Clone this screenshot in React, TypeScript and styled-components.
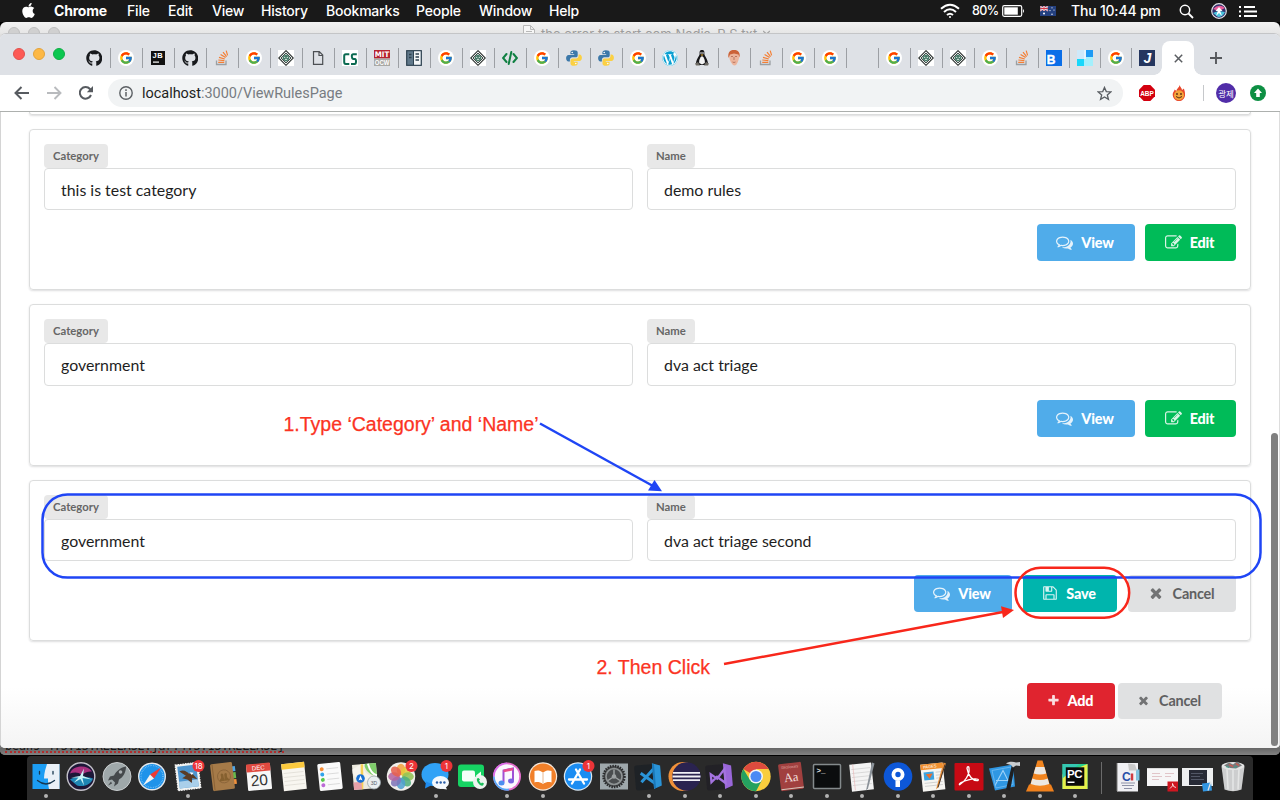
import React from "react";
import styled, { createGlobalStyle } from "styled-components";
import { FaApple, FaGithub, FaWordpress } from "react-icons/fa";
import { FcGoogle } from "react-icons/fc";

const GlobalStyle = createGlobalStyle`
  * { box-sizing: border-box; }
  html, body { margin: 0; padding: 0; background: #000; overflow: hidden; }
  svg { display: block; flex: none; }
`;

const Screen = styled.div`
  width: 1280px;
  height: 800px;
  display: flex;
  flex-direction: column;
  background: #000;
  overflow: hidden;
  position: relative;
  font-family: Lato, "Liberation Sans", sans-serif;
`;

/* ---------- system menu bar ---------- */

const MenuBar = styled.div`
  height: 22px;
  flex: none;
  display: flex;
  align-items: center;
  background: #191919;
  color: #fff;
  font: 500 14px/22px Inter, Roboto, sans-serif;
  padding-left: 20px;
`;

const AppleSlot = styled.div`
  width: 34px;
  padding-bottom: 2px;
`;

const MenuItem = styled.div<{ $w: number; $bold?: boolean; $ls?: number }>`
  width: ${(p) => p.$w}px;
  flex: none;
  white-space: nowrap;
  font-weight: ${(p) => (p.$bold ? 700 : 500)};
  letter-spacing: ${(p) => p.$ls ?? -0.2}px;
`;

const StatusArea = styled.div`
  margin-left: auto;
  display: flex;
  align-items: center;
  height: 22px;
`;

const StatusText = styled.span<{ $size?: number; $w: number; $ls?: number }>`
  font-size: ${(p) => p.$size ?? 14}px;
  width: ${(p) => p.$w}px;
  letter-spacing: ${(p) => p.$ls ?? -0.2}px;
  white-space: nowrap;
`;

const StatusIcon = styled.div<{ $w: number }>`
  width: ${(p) => p.$w}px;
  flex: none;
`;

/* ---------- windows ---------- */

const BackWindow = styled.div`
  height: 733px;
  flex: none;
  border-radius: 6px 6px 5px 5px;
  background: linear-gradient(#f2f2f2 0, #e6e6e6 11px, #777 40px);
  overflow: hidden;
`;

const BackTitle = styled.div`
  height: 11px;
  display: flex;
  padding-left: 8px;
  overflow: hidden;
`;

const BackDot = styled.i`
  width: 12px;
  height: 12px;
  margin: 5px 8px 0 0;
  border-radius: 50%;
  border: 1px solid #bdbdbd;
  background: #d0d0d0;
  flex: none;
`;

const BackCaption = styled.div`
  display: flex;
  gap: 6px;
  margin-left: 455px;
  margin-top: 3px;
  height: 18px;
  color: #9c9c9c;
  font: 400 13px/18px Inter, sans-serif;
  white-space: nowrap;
`;

const BackFoot = styled.div`
  height: 7px;
  overflow: hidden;
  background: linear-gradient(#666, #828282);
  display: flex;
  align-items: flex-start;
  padding-left: 5px;
`;

const ConsoleLine = styled.div`
  margin-top: -8px;
  height: 13px;
  font: 11.6px/13px "DejaVu Sans Mono", monospace;
  color: #181818;
  white-space: nowrap;
  border-bottom: 2px dotted #b02c2c;
`;

const Browser = styled.div`
  height: 715px;
  display: flex;
  flex-direction: column;
  border-radius: 6px 6px 5px 5px;
  overflow: hidden;
  background: #fff;
  border-top: 1px solid #c4c5c7;
`;

const TabStrip = styled.div`
  height: 41px;
  flex: none;
  display: flex;
  align-items: flex-end;
  background: #dee1e6;
  padding-left: 13px;
`;

const Lights = styled.div`
  display: flex;
  gap: 8px;
  width: 65px;
  padding-bottom: 15px;
`;

const Light = styled.i<{ $c: string; $b: string }>`
  width: 12px;
  height: 12px;
  border-radius: 50%;
  background: ${(p) => p.$c};
  border: 1px solid ${(p) => p.$b};
`;

const Tab = styled.div<{ $w?: number; $edge?: boolean }>`
  width: ${(p) => p.$w ?? 32}px;
  height: 20px;
  margin-bottom: 7px;
  padding-right: ${(p) => (p.$w === 32 || p.$w === undefined ? 1 : 0)}px;
  flex: none;
  display: flex;
  align-items: center;
  justify-content: center;
  border-right: ${(p) => (p.$edge ? "none" : "1px solid #9c9fa4")};
`;

const GoogleDisc = styled.div`
  width: 16px;
  height: 16px;
  border-radius: 50%;
  background: #fff;
  display: flex;
  align-items: center;
  justify-content: center;
`;

const ActiveTab = styled.div`
  width: 32px;
  height: 34px;
  flex: none;
  border-radius: 8px 8px 0 0;
  background: #fff;
  display: flex;
  align-items: center;
  justify-content: center;
  position: relative;
  &::before,
  &::after {
    content: "";
    position: absolute;
    bottom: 0;
    width: 8px;
    height: 8px;
  }
  &::before {
    left: -8px;
    background: radial-gradient(circle at 0 0, transparent 7.5px, #fff 8px);
  }
  &::after {
    right: -8px;
    background: radial-gradient(circle at 100% 0, transparent 7.5px, #fff 8px);
  }
`;

const NewTab = styled.div`
  width: 44px;
  height: 34px;
  display: flex;
  align-items: center;
  justify-content: center;
`;

const Toolbar = styled.div`
  height: 37px;
  flex: none;
  display: flex;
  align-items: center;
  background: #fff;
  border-bottom: 1px solid #adb0ae;
  padding-left: 14px;
`;

const NavButton = styled.div<{ $w: number }>`
  width: ${(p) => p.$w}px;
  flex: none;
`;

const Omnibox = styled.div`
  width: 1015px;
  height: 28px;
  border-radius: 14px;
  background: #f1f3f4;
  display: flex;
  align-items: center;
  padding: 0 11px 0 11px;
`;

const Url = styled.div`
  flex: 1;
  margin-left: 9px;
  padding-top: 1px;
  font: 400 14.5px/28px Roboto, sans-serif;
  letter-spacing: -0.03px;
  color: #777c82;
  b {
    font-weight: 400;
    color: #1d1f22;
  }
`;

const Extensions = styled.div`
  display: flex;
  align-items: center;
`;

const Slot = styled.div<{ $ml: number }>`
  margin-left: ${(p) => p.$ml}px;
`;

const Avatar = styled.div`
  width: 20px;
  height: 20px;
  margin-left: 12px;
  border-radius: 50%;
  background: #512da8;
  color: #fff;
  font: 400 8.5px/20px "Noto Sans CJK KR", sans-serif;
  text-align: center;
  white-space: nowrap;
`;

const Rule = styled.i`
  width: 1px;
  height: 16px;
  margin-left: 16px;
  background: #c6c8cb;
`;

/* ---------- page ---------- */

const Page = styled.div`
  flex: 1;
  min-height: 0;
  display: flex;
  border-left: 1px solid #d4d4d4;
  background: linear-gradient(#fff 0, #fff 575px, #f4f4f4 100%);
`;

const Content = styled.div`
  flex: 1;
  padding: 0 19px 0 28px;
`;

const ScrollTrack = styled.div`
  width: 9px;
  padding: 321px 2px 0 0;
  border-right: 1px solid #ddd;
`;

const Thumb = styled.div`
  width: 7px;
  height: 313px;
  border-radius: 4px;
  background: #808080;
`;

const Card = styled.section<{ $tail?: boolean }>`
  height: ${(p) => (p.$tail ? 3 : 161.4)}px;
  margin-bottom: 14px;
  padding: ${(p) => (p.$tail ? "0" : "14px")};
  width: 1222px;
  border: 1px solid #dcdddd;
  border-top-width: ${(p) => (p.$tail ? 0 : 1)}px;
  border-radius: ${(p) => (p.$tail ? "0 0 4px 4px" : "4px")};
  box-shadow: 0 1px 2px 0 rgba(34, 36, 38, 0.15);
`;

const Fields = styled.div`
  display: grid;
  grid-template-columns: 1fr 1fr;
  gap: 14px;
`;

const Label = styled.div`
  display: table;
  height: 24px;
  padding: 0 9px;
  border-radius: 4px;
  background: #e8e8e8;
  color: #666;
  font: 700 11.3px/24px Lato, sans-serif;
`;

const Input = styled.div`
  height: 42.2px;
  padding: 0 16px;
  border: 1px solid #dcdddd;
  border-radius: 4px;
  background: #fff;
  color: #1e1e1e;
  font: 400 15.9px/42px Lato, sans-serif;
`;

const Actions = styled.div<{ $gap: number }>`
  display: flex;
  justify-content: flex-end;
  gap: ${(p) => p.$gap}px;
  margin-top: 14px;
`;

const FooterActions = styled.div`
  display: flex;
  gap: 3px;
  justify-content: flex-end;
  margin-top: 41.8px;
  padding-right: 30px;
`;

type Tone = "blue" | "green" | "teal" | "red" | "grey";
const tones: Record<Tone, string> = {
  blue: "#50acea",
  green: "#00bb58",
  teal: "#00b5ad",
  red: "#e0242f",
  grey: "#e0e1e2",
};

const Button = styled.div<{ $tone: Tone; $w: number; $short?: boolean }>`
  width: ${(p) => p.$w}px;
  height: ${(p) => (p.$short ? 36 : 37)}px;
  padding-right: 2px;
  display: flex;
  align-items: center;
  justify-content: center;
  border-radius: 4px;
  background: ${(p) => tones[p.$tone]};
  color: ${(p) => (p.$tone === "grey" ? "#5f6061" : "#fff")};
  font: ${(p) => (p.$tone === "grey" ? 700 : 900)} 14.4px / ${(p) => (p.$short ? 36 : 37)}px Lato, sans-serif;
  letter-spacing: -0.2px;
  svg {
    fill: currentColor;
    opacity: 0.85;
    margin-right: ${(p) => (p.$tone === "grey" ? 9 : 8)}px;
  }
`;

const Overlay = styled.svg`
  position: absolute;
  left: 0;
  top: 0;
  pointer-events: none;
`;

/* ---------- dock ---------- */

const Dock = styled.div`
  width: 1226px;
  height: 44px;
  margin: 1px 0 0 27px;
  flex: none;
  display: flex;
  border-radius: 4px 4px 0 0;
  background: #2a2a2a;
  padding-left: 1px;
`;

const DockSlot = styled.div<{ $w?: number }>`
  width: ${(p) => p.$w ?? 35.5}px;
  height: 44px;
  flex: none;
  display: flex;
  justify-content: center;
  svg {
    overflow: visible;
  }
`;

const paths = {
  comments:
    "M704 384q-153 0-286 52t-211.500 141-78.500 191q0 82 53 158t149 132l97 56-35 84q34-20 62-39l44-31 53 10q78 14 153 14 153 0 286-52t211.500-141 78.500-191-78.500-191-211.500-141-286-52zM704 256q191 0 353.500 68.500t256.500 186.500 94 257-94 257-256.500 186.500-353.500 68.500q-86 0-176-16-124 88-278 128-36 9-86 16h-3q-11 0-20.500-8t-11.500-21q-1-3-1-6.500t.5-6.5 2-6l2.500-5 3.500-5.500 4-5 4.500-5 4-4.500q5-6 23-25t26-29.500 22.500-29 25-38.500 20.500-44q-124-72-195-177t-71-224q0-139 94-257t256.500-186.500 353.500-68.500zM1526 1425q10 24 20.500 44t25 38.500 22.500 29 26 29.500 23 25q1 1 4 4.500t4.500 5 4 5 3.500 5.500l2.500 5t2 6 .5 6.500-1 6.500q-3 14-13 22t-22 7q-50-7-86-16-154-40-278-128-90 16-176 16-271 0-472-132 58 4 88 4 161 0 309-45t264-129q125-92 192-212t67-254q0-77-23-152 129 71 204 178t75 230q0 120-71 224.500t-195 176.500z",
  edit: "M888 1184l116-116-152-152-116 116v56h96v96h56zm440-720q-16-16-33 1l-350 350q-17 17-1 33t33-1l350-350q17-17 1-33zm80 594v190q0 119-84.500 203.500t-203.500 84.500h-832q-119 0-203.500-84.500t-84.500-203.500v-832q0-119 84.500-203.500t203.500-84.500h832q63 0 117 25 15 7 18 23 3 17-9 29l-49 49q-14 14-32 8-23-6-45-6h-832q-66 0-113 47t-47 113v832q0 66 47 113t113 47h832q66 0 113-47t47-113v-126q0-13 9-22l64-64q15-15 35-7t20 29zm-96-738l288 288-672 672h-288v-288zm444 132l-92 92-288-288 92-92q28-28 68-28t68 28l152 152q28 28 28 68t-28 68z",
  save: "M512 1536h768v-384h-768v384zm896 0h128v-896q0-14-10-38.500t-20-34.500l-281-281q-10-10-34-20t-39-10v416q0 40-28 68t-68 28h-576q-40 0-68-28t-28-68v-416h-128v1280h128v-416q0-40 28-68t68-28h832q40 0 68 28t28 68v416zm-384-928v-320q0-13-9.500-22.500t-22.500-9.500h-192q-13 0-22.500 9.500t-9.500 22.500v320q0 13 9.500 22.500t22.500 9.500h192q13 0 22.500-9.500t9.500-22.500zm640 32v928q0 40-28 68t-68 28h-1344q-40 0-68-28t-28-68v-1344q0-40 28-68t68-28h928q40 0 88 20t76 48l280 280q28 28 48 76t20 88z",
  times:
    "M1490 1322q0 40-28 68l-136 136q-28 28-68 28t-68-28l-294-294-294 294q-28 28-68 28t-68-28l-136-136q-28-28-28-68t28-68l294-294-294-294q-28-28-28-68t28-68l136-136q28-28 68-28t68 28l294 294 294-294q28-28 68-28t68 28l136 136q28 28 28 68t-28 68l-294 294 294 294q28 28 28 68z",
  plus: "M1600 736v192q0 40-28 68t-68 28h-416v416q0 40-28 68t-68 28h-192q-40 0-68-28t-28-68v-416h-416q-40 0-68-28t-28-68v-192q0-40 28-68t68-28h416v-416q0-40 28-68t68-28h192q40 0 68 28t28 68v416h416q40 0 68 28t28 68z",
};

const Glyph = ({ name, size = 17 }: { name: keyof typeof paths; size?: number }) => (
  <svg width={size} height={size} viewBox="0 0 1792 1792">
    <path d={paths[name]} />
  </svg>
);

/* ---------- favicons ---------- */

const Box16 = ({ children }: { children: React.ReactNode }) => (
  <svg width="16" height="16" viewBox="0 0 16 16">
    {children}
  </svg>
);

const Google = () => (
  <GoogleDisc>
    <FcGoogle size={14} />
  </GoogleDisc>
);

const Diamond = () => (
  <Box16>
    <rect width="16" height="16" fill="#fff" />
    <path d="M8 .7 15.300 8 8 15.300.7 8z" fill="#fff" stroke="#2b312f" strokeWidth="1.100" />
    <path d="M8 3 13 8 8 13 3 8z" fill="#b9c9c2" stroke="#3f4d48" strokeWidth="1" />
    <circle cx="8" cy="8" r="3" fill="#3d7560" />
    <path d="M6 7.300h1.300M8.700 7.300H10M6.800 9.300h2.400" stroke="#fff" strokeWidth=".9" />
  </Box16>
);

const StackO = () => (
  <Box16>
    <path d="M2.500 10.500V14.500H12V10.500" fill="none" stroke="#9b9fa3" strokeWidth="1.300" />
    <path
      d="M4.200 12.400H10.300M4.300 10 10.400 10.700M5 7.300 10.800 9M6.600 4.400 11.600 7.600M9 2.200 12.600 6.600M12.200.6 13.600 5.400"
      stroke="#f47f35"
      strokeWidth="1.200"
      fill="none"
    />
  </Box16>
);

const Python = () => (
  <Box16>
    <path
      d="M7.900.2C5.300.2 4.400 1.200 4.400 2.500V4.300H8.200V5H2.600C1 5 .1 6.300.1 8.200S1.100 11.500 2.400 11.500H3.900V9.600C3.900 8.300 5 7.300 6.300 7.300H9.800C10.900 7.300 11.700 6.500 11.700 5.400V2.500C11.700 1.100 10.400.2 7.900.2Z"
      fill="#3c78a9"
    />
    <path
      d="M8.100 15.800C10.700 15.800 11.600 14.800 11.600 13.500V11.700H7.800V11H13.400C15 11 15.900 9.700 15.900 7.800S14.900 4.500 13.600 4.500H12.500V6C12.500 7.300 11.400 8.400 10.100 8.400H6.400C5.300 8.400 4.500 9.400 4.500 10.500V13.500C4.500 14.900 5.700 15.800 8.100 15.800Z"
      fill="#fbd043"
    />
    <circle cx="6.200" cy="2.500" r=".8" fill="#fff" />
    <circle cx="9.800" cy="13.500" r=".8" fill="#fff" />
  </Box16>
);

const Favicon = ({ kind }: { kind: string }) => {
  switch (kind) {
    case "git":
      return <FaGithub size={16.5} color="#17191c" />;
    case "g":
      return <Google />;
    case "so":
      return <StackO />;
    case "di":
      return <Diamond />;
    case "py":
      return <Python />;
    case "wp":
      return (
        <GoogleDisc>
          <FaWordpress size={16} color="#0aa0d2" />
        </GoogleDisc>
      );
    case "jb":
      return (
        <Box16>
          <rect x="1" y="1" width="14" height="14" fill="#111" />
          <text x="2.600" y="8.300" fontSize="7.500" fontWeight="700" fill="#fff" fontFamily="Liberation Sans" textLength="10">
            JB
          </text>
          <rect x="3" y="11.500" width="6" height="1.200" fill="#fff" />
        </Box16>
      );
    case "file":
      return (
        <Box16>
          <path d="M3.500 1.700H9.300L12.700 5.100V14.300H3.500ZM9 2V5.500H12.500" fill="none" stroke="#4c4f53" strokeWidth="1.200" />
        </Box16>
      );
    case "cs":
      return (
        <Box16>
          <rect width="16" height="16" fill="#fff" />
          <path d="M7.300 4.200H3.800Q2.200 4.200 2.200 6V12Q2.200 14 3.800 14H7.300" fill="none" stroke="#0b6a51" strokeWidth="2" />
          <path d="M14.800 4.200H11.300Q9.800 4.200 9.800 6.300T11.300 9H13Q14 9 14 11.500T12.500 14H9" fill="none" stroke="#0b6a51" strokeWidth="2" />
        </Box16>
      );
    case "mit":
      return (
        <Box16>
          <rect width="16" height="8.500" fill="#b5222e" />
          <rect y="8.500" width="16" height="7.500" fill="#a9a9a5" />
          <text x=".8" y="7.400" fontSize="7.600" fontWeight="700" fill="#fff" fontFamily="DejaVu Sans" textLength="14.500" lengthAdjust="spacingAndGlyphs">
            MIT
          </text>
          <text x=".8" y="14.800" fontSize="6.800" fontWeight="700" fill="#fff" fontFamily="Liberation Sans" textLength="14.500" lengthAdjust="spacingAndGlyphs">
            OCW
          </text>
        </Box16>
      );
    case "book":
      return (
        <Box16>
          <rect x=".7" y=".7" width="14.600" height="14.600" fill="#60788a" stroke="#2e4250" strokeWidth="1.200" />
          <rect x="7.800" y="1.300" width="6.800" height="13.400" fill="#f4f6f7" />
          <path d="M7.500 1V15" stroke="#2e4250" />
          <path d="M3 4.500H5.500M3 7.500H5.500M9.500 4H13M9.500 7H13M9.500 10H13" stroke="#2e4250" strokeWidth="1.400" />
        </Box16>
      );
    case "code":
      return (
        <Box16>
          <path d="M4.500 4 1.100 8 4.500 12M11.500 4 14.900 8 11.500 12M9.300 2 6.700 14" fill="none" stroke="#108043" strokeWidth="2" strokeLinecap="round" />
        </Box16>
      );
    case "tux":
      return (
        <Box16>
          <path d="M8 0C5.500 0 5.500 2 5.600 4 5.600 6 2.500 8.500 2 13L4 15H12L14 13C13.500 8.500 10.400 6 10.400 4 10.500 2 10.500 0 8 0Z" fill="#17171a" />
          <path d="M8 6C6 7.500 4.800 10 5.200 13L8 14.500 10.800 13C11.200 10 10 7.500 8 6Z" fill="#f3f3f3" />
          <circle cx="7" cy="3" r=".8" fill="#fff" />
          <circle cx="9" cy="3" r=".8" fill="#fff" />
          <path d="M6.500 4.500H9.500L8 6Z" fill="#eab02d" />
          <path d="M1 13.500 4 12 6 15.500H2ZM15 13.500 12 12 10 15.500H14Z" fill="#6d6a63" />
        </Box16>
      );
    case "face":
      return (
        <Box16>
          <path d="M3 4C3 1 5 0 8 0S13.500 1.500 13.300 5C13.300 9 12 12 10.500 14.500Q8.500 16.500 6.500 14.500C4 11.500 3 8 3 4Z" fill="#ecb49b" />
          <path d="M2.500 8C1.500 2.500 4 0 8 0S14.500 2.500 13.500 7.500L12.500 4.500 8 3.500 4 4.500Z" fill="#cb6238" />
          <path d="M5 6.500H7M9 6.500H11M8 7V10M6.500 12Q8 13 9.500 12" stroke="#a55c49" strokeWidth=".7" fill="none" />
        </Box16>
      );
    case "b":
      return (
        <Box16>
          <rect width="16" height="16" fill="#0a6ee8" />
          <text x="0.800" y="14.300" fontSize="12" fontWeight="700" fill="#fff" stroke="#fff" strokeWidth=".4" fontFamily="Liberation Sans">
            B
          </text>
        </Box16>
      );
    case "tiles":
      return (
        <Box16>
          <rect width="9" height="9" fill="#cfe9fa" />
          <rect x="9" width="7" height="7" fill="#1e9af4" />
          <rect y="9" width="7" height="7" fill="#19d7fb" />
          <rect x="7" y="7" width="9" height="9" fill="#a4effc" />
          <rect x="7" width="2" height="9" fill="#e6f4fd" />
        </Box16>
      );
    case "j":
      return (
        <Box16>
          <rect width="16" height="16" fill="#25365f" />
          <text x="4.500" y="12.800" fontSize="14" fontWeight="700" fontStyle="italic" fill="#fff" fontFamily="Liberation Sans">
            J
          </text>
        </Box16>
      );
    default:
      return null;
  }
};

const tabs =
  "git g jb git so g di file cs mit book g di code g py py g wp tux face so g g blank g di di g so b tiles g j".split(" ");

const tabWidth = (i: number) => {
  if (i === 0) return 33;
  if (i === tabs.length - 1) return 30;
  return i >= 30 ? 31 : 32;
};

/* ---------- dock icons: artwork centred on 0,0 ---------- */

const dockArt: Record<string, React.ReactNode> = {
  finder: (
    <>
      <rect x="-13.500" y="-12.500" width="27" height="25" fill="#1c9df3" />
      <path d="M1-12.500H13.500V12.500H3C2 8 2 5 2 2H-2C-2-4 0-9 1-12.500Z" fill="#e9f0f7" />
      <path d="M-6.500-5V-2.500M7-5V-2.500M-8.500 4Q0 11 8.500 4" stroke="#17374f" strokeWidth="1.300" fill="none" strokeLinecap="round" />
    </>
  ),
  siri: (
    <>
      <circle r="13.800" fill="#1d1738" stroke="#c3c1c9" strokeWidth="1.400" />
      <path d="M-11-3C-9-11 6-13 11-5 6-5 3-4 1-1-3-5-7-4-11-3Z" fill="#a8307f" />
      <path d="M-11 3C-6 0-2 0 0 0 5 0 9 1 12 2 10 8 3 11-4 9Z" fill="#1e86b4" />
      <path d="M-10 1-1-.5 3-8 2-.5 11 3 1.500 1.500 3 9-.5 2.500-7 6-2.500 1Z" fill="#c9f4f6" />
    </>
  ),
  launch: (
    <>
      <circle r="14" fill="#9fa8aa" stroke="#c9cdcf" strokeWidth="1" />
      <path d="M9-10C3-9-1-5-3-1L-7 0-9 4-5 3-2 6-3 10 1 7 2 3C6 1 9-4 9-10Z" fill="#45494c" />
      <circle cx="3.500" cy="-4.500" r="1.800" fill="#a9afb2" />
      <path d="M-6 5-9 9-5 7Z" fill="#45494c" />
    </>
  ),
  safari: (
    <>
      <circle r="14" fill="#e4e8ec" />
      <circle r="12.600" fill="#1f93ea" />
      <circle r="11" fill="none" stroke="#8fcbf7" strokeWidth="1.200" strokeDasharray=".6 1.100" />
      <path d="M9-9 2 2-2-2Z" fill="#ee3a34" />
      <path d="M-9 9 2 2-2-2Z" fill="#f3f3f3" />
    </>
  ),
  mail: (
    <g transform="rotate(-7)">
      <rect x="-11.500" y="-13" width="23" height="26" fill="#f1f2f0" stroke="#fff" strokeDasharray="1.500 1" />
      <rect x="-9.500" y="-11" width="19" height="22" fill="#4f96cf" />
      <rect x="-9.500" y="4" width="19" height="7" fill="#a9cfea" />
      <path d="M-8-6C-3-8 0-4 1-3L5-2 9 4 4 2 3 7-1 3-6 1-2-1Z" fill="#5a3c26" />
      <path d="M2-4 6-3 4-1Z" fill="#fff" />
    </g>
  ),
  contacts: (
    <g transform="rotate(-7)">
      <path d="M9-9H13V-4H9Z" fill="#4fa6e8" />
      <path d="M9-3H13V3H9Z" fill="#66bb4d" />
      <path d="M9 4H13V9H9Z" fill="#f0913c" />
      <rect x="-11.500" y="-13.500" width="22" height="27" rx="1.500" fill="#a57a48" />
      <path d="M-9.500-13V13" stroke="#8a6236" />
      <circle cx="1" cy="0" r="6.500" fill="none" stroke="#8a6338" strokeWidth=".9" />
      <path d="M-4 4.500C-3.500 2-1.500 2-2-.5-3-4 1-4 .6-.5.5 2 1 2 1 4.500ZM6 4.500C5.500 2 3.500 2 4-.5 5-4 1-4 1.400-.5 1.500 2 1 2 1 4.500Z" fill="#85602f" />
    </g>
  ),
  cal: (
    <g transform="rotate(-5)">
      <rect x="-12" y="-12.500" width="24" height="26" rx="1" fill="#f7f7f7" />
      <rect x="-12" y="-13" width="24" height="8" rx="1" fill="#e0493f" />
      <text y="-6.600" fontSize="6" fill="#fff" textAnchor="middle" fontFamily="Liberation Sans">
        DEC
      </text>
      <text y="9" fontSize="15.500" fill="#333" textAnchor="middle" fontFamily="Liberation Sans">
        20
      </text>
    </g>
  ),
  notes: (
    <g transform="rotate(-6)">
      <rect x="-11.500" y="-13.500" width="23" height="27" fill="#f8f6f0" />
      <rect x="-11.500" y="-13.500" width="23" height="5.500" fill="#fcca3e" />
      <path d="M-10-4H10M-10 0H10M-10 4H10M-10 8H10" stroke="#dddad2" strokeWidth=".7" />
    </g>
  ),
  remind: (
    <g transform="rotate(-6)">
      <rect x="-11.500" y="-13.500" width="23" height="27" rx="1.500" fill="#fafafa" />
      <circle cx="-7.500" cy="-8" r="2" fill="#f58b34" />
      <circle cx="-7.500" cy="-2.700" r="2" fill="#30a3ea" />
      <circle cx="-7.500" cy="2.600" r="2" fill="#5ac94c" />
      <circle cx="-7.500" cy="8" r="2" fill="#bc6ad6" />
      <path d="M-3-8H9M-3-2.700H9M-3 2.600H9M-3 8H9" stroke="#d5d5d5" strokeWidth=".8" />
    </g>
  ),
  maps: (
    <>
      <g transform="rotate(-5)">
        <rect x="-12" y="-12.500" width="24" height="25" fill="#ece9dd" />
        <path d="M0-12.500H12V0C6 0 1-5 0-12.500Z" fill="#7fcd6b" />
        <path d="M-12-8-3-12.500H1C-3-4 4 0 12 2V7C0 5-8 4-12-4Z" fill="#f6f3ec" />
        <path d="M-4 12.500-2-12.500" stroke="#f7cf56" strokeWidth="2.500" />
        <path d="M4-12.500Q6-2 12 0" stroke="#fff" strokeWidth="2" fill="none" />
        <rect x="-12" y="5" width="8" height="7.500" fill="#e5a0a8" />
      </g>
      <circle cx="-4.500" cy="2" r="4.300" fill="#1770d4" />
      <path d="M-4.500-1-2.500 4-4.500 3-6.500 4Z" fill="#fff" />
      <circle cx="9" cy="6" r="6.500" fill="#e9eef0" stroke="#99a4a9" strokeWidth=".8" />
      <text x="9" y="8" fontSize="5" fill="#55606a" textAnchor="middle" fontFamily="Liberation Sans">
        3D
      </text>
    </>
  ),
  photos: (
    <>
      <circle r="14.200" fill="#f1efeb" />
      {["#f5a13c", "#e5c93a", "#92c353", "#4fae7c", "#4f9fd0", "#7f74b9", "#b5639f", "#e7604d"].map((c, i) => (
        <ellipse key={c} cy="-7" rx="4.300" ry="5.800" fill={c} opacity=".86" transform={`rotate(${i * 45})`} />
      ))}
    </>
  ),
  messages: (
    <>
      <ellipse cx="-1" cy="-2" rx="13.500" ry="11.500" fill="#30a2f6" />
      <path d="M-10 5-11 12-3 8Z" fill="#1f8cee" />
      <ellipse cx="4.500" cy="6" rx="8.500" ry="6.500" fill="#f4f9fd" />
      <path d="M9 9 11 13 4 12Z" fill="#f4f9fd" />
      <circle cx="1" cy="6" r="1.200" fill="#2a5ea8" />
      <circle cx="4.700" cy="6" r="1.200" fill="#2a5ea8" />
      <circle cx="8.400" cy="6" r="1.200" fill="#2a5ea8" />
    </>
  ),
  facetime: (
    <>
      <rect x="-14" y="-12" width="26" height="22.500" rx="3" fill="#16d363" />
      <rect x="-10" y="-6" width="13" height="11" rx="2" fill="#f4fff8" />
      <path d="M4-1 9-5V4Z" fill="#f4fff8" />
      <circle cx="8" cy="5.500" r="7" fill="#eef4f0" />
      <path d="M5 2C4 5 8 10 11 9L12 7 10 6 9 7 7 4 8 3 6.500 1.500Z" fill="#19bd59" />
    </>
  ),
  itunes: (
    <>
      <circle r="14" fill="#e46fcd" />
      <path d="M-14 0A14 14 0 0 1 0-14L0 0Z" fill="#d86ce6" />
      <path d="M-14 0A14 14 0 0 0 2 14L0 0Z" fill="#5aa9f5" />
      <circle r="12.200" fill="#fbf8fd" />
      <path d="M-3.500 6V-6L6-8V4" stroke="#a04fd6" strokeWidth="2" fill="none" />
      <path d="M-3.500-5.500 6-7.500" stroke="#e84b8b" strokeWidth="2.600" />
      <ellipse cx="-5.500" cy="6.500" rx="3" ry="2.500" fill="#4c8ef0" />
      <ellipse cx="4" cy="4.500" rx="3" ry="2.500" fill="#7a63df" />
    </>
  ),
  books: (
    <>
      <circle r="14.200" fill="#f6e9dd" />
      <circle r="13" fill="#f1802a" />
      <path d="M0-4C-3-6.500-6-6.500-8.500-5.500V6C-6 5-3 5.500 0 7.500 3 5.500 6 5 8.500 6V-5.500C6-6.500 3-6.500 0-4Z" fill="#fff" />
      <path d="M0-4V7" stroke="#e5a673" strokeWidth=".8" />
    </>
  ),
  appstore: (
    <>
      <circle r="14.200" fill="#dbe9f4" />
      <circle r="13" fill="#1b8df2" />
      <path d="M-6 7 2-7M6 7-2-7M-9 3H9" stroke="#fff" strokeWidth="2.300" strokeLinecap="round" />
    </>
  ),
  prefs: (
    <>
      <rect x="-14" y="-13" width="28" height="26" fill="#9ea7ab" />
      <circle r="10.500" fill="#4a4d4f" stroke="#2a2b2c" strokeWidth="2.500" strokeDasharray="1.500 1" />
      <circle r="8" fill="none" stroke="#8f9495" strokeWidth="1.600" />
      <circle r="2.300" fill="#9da1a2" />
      <path d="M0 0V-7M0 0 6 4M0 0-6 4" stroke="#9da1a2" strokeWidth="1.500" />
    </>
  ),
  vscode: (
    <g transform="rotate(-5)">
      <rect x="-14" y="-12" width="22" height="25" rx="2" fill="#1e2226" />
      <path d="M4-13 12-10V10L4 13Z" fill="#2a94d8" />
      <path d="M5-7-8 5M-8-4 5 7" stroke="#2a94d8" strokeWidth="3" />
      <path d="M5-12V12" stroke="#1a77b8" strokeWidth="2" />
    </g>
  ),
  eclipse: (
    <>
      <circle cx="-2" r="14.500" fill="#f0913a" />
      <circle cx="1.500" r="14.200" fill="#2a2350" />
      <path d="M-12-3.600H15M-12.500 0H15.500M-12 3.600H15" stroke="#f1f0f6" strokeWidth="1.900" />
    </>
  ),
  vs: (
    <g transform="rotate(-5)">
      <rect x="-14" y="-12" width="22" height="25" rx="2" fill="#222126" />
      <path d="M4-13 12-10V10L4 13Z" fill="#9a67d9" />
      <path d="M5-7-3 2-9-3V5L-3 0 5 7Z" fill="none" stroke="#a473e0" strokeWidth="2.300" />
    </g>
  ),
  chrome: (
    <>
      <circle r="14.700" fill="#f9cd3d" />
      <path d="M0 0-12.700-7.400A14.700 14.700 0 0 1 12.700-7.400H0Z" fill="#dd4b3e" />
      <path d="M-12.700-7.400A14.700 14.700 0 0 0 0 14.700L6 3.500-6 3.500Z" fill="#25a160" />
      <circle r="7" fill="#f3f5f6" />
      <circle r="5.500" fill="#4a8af4" />
    </>
  ),
  dict: (
    <g transform="rotate(-7)">
      <rect x="-11.500" y="-13.500" width="23" height="27" rx="1.500" fill="#a1403f" />
      <path d="M-11 12H11.500" stroke="#d7c6bb" strokeWidth="1.200" />
      <text y="-8.500" fontSize="4" fill="#e7b9b2" textAnchor="middle" fontFamily="Liberation Serif">
        Dictionary
      </text>
      <text y="5" fontSize="12.500" fill="#f1dedb" textAnchor="middle" fontFamily="Liberation Serif">
        Aa
      </text>
    </g>
  ),
  term: (
    <>
      <rect x="-13.500" y="-12" width="27" height="24" rx="1" fill="#0b0d0e" stroke="#848a8c" strokeWidth="1.500" />
      <text x="-10.500" y="-3.500" fontSize="7.500" fontWeight="700" fill="#e8e8e8" fontFamily="Liberation Mono">
        &gt;_
      </text>
    </>
  ),
  textedit: (
    <>
      <g transform="rotate(-6)">
        <rect x="-11.500" y="-13" width="22" height="27" fill="#f4f4f4" />
        <path d="M-10-8H9M-10-4H9M-10 0H9M-10 4H9M-10 8H9" stroke="#cfcfcf" strokeWidth=".7" />
        <path d="M-8-13V13" stroke="#eab5b5" strokeWidth=".6" />
      </g>
      <path d="M10-14 12.500-13 6 12 4 14Z" fill="#8b9299" />
    </>
  ),
  sourcetree: (
    <>
      <circle r="14.300" fill="#0d57d8" />
      <circle cy="-2" r="4.600" fill="none" stroke="#fff" strokeWidth="3.800" />
      <rect x="-2.500" y="4" width="4.500" height="6.500" fill="#fff" />
    </>
  ),
  pages: (
    <>
      <g transform="rotate(-6)">
        <rect x="-11.500" y="-13" width="22.500" height="27" fill="#f6f5f1" />
        <rect x="-11.500" y="-13" width="22.500" height="5.500" fill="#f1902f" />
        <rect x="-9" y="-5" width="10" height="8" fill="#3ba3e0" />
        <path d="M-7-3H0L-3.500 2Z" fill="#ec6d2c" />
        <path d="M3-4H9M3-1H9M3 2H9M-9 6H9M-9 9H9" stroke="#c9c9c9" strokeWidth=".8" />
        <text x="-9" y="-8.800" fontSize="4" fill="#fff" fontFamily="Liberation Sans">
          PAGES
        </text>
      </g>
      <path d="M10.500-14 13-13 5 11 3 13Z" fill="#e58c36" />
      <path d="M12-12 5 11" stroke="#46352a" strokeWidth="1" />
    </>
  ),
  acrobat: (
    <>
      <rect x="-14.500" y="-13.500" width="29" height="27.500" rx="1" fill="#c70a14" />
      <path d="M-9 8C-5 6 1-2 0-8 0-11-2-10-2-8-1-1 4 5 9 4 11 2 4 1-8 6-10 7-10 9-9 8Z" fill="none" stroke="#fff" strokeWidth="1.300" />
    </>
  ),
  xcode: (
    <>
      <path d="M-15-8 9-12 11 10-9 14Z" fill="#2f97e3" />
      <path d="M-9 9-1-6 6 8M-8 4H7" stroke="#9cd2f8" strokeWidth="1.100" fill="none" />
      <path d="M-12-6 7-9.500 9 8-8 11.500Z" stroke="#7cc1f3" strokeWidth=".7" fill="none" />
      <path d="M8-12 2 13 6 14 11-11Z" fill="#1f2022" />
      <path d="M2-13C4-15 9-15.500 12-14L16-14.500V-10.500L12-11 9-9 7-11.500Z" fill="#c9cdd0" />
    </>
  ),
  vlc: (
    <>
      <path d="M-11 8H11L14 15H-14Z" fill="#f0811d" />
      <path d="M-2.500-16H2.500L10 9Q0 14-10 9Z" fill="#f2851f" />
      <path d="M-4.400-9.500H4.400L6.300-3Q0-1-6.300-3ZM-7.700 2Q0 5 7.700 2L9.300 7.500Q0 11-9.300 7.500Z" fill="#ece8e2" />
    </>
  ),
  pycharm: (
    <>
      <rect x="-12.500" y="-12.500" width="25" height="25" fill="#28d08f" />
      <path d="M-12.500 12.500V-2L12.500-12.500V12.500Z" fill="#e5f04c" />
      <path d="M-12.500-12.500H4L-12.500 2Z" fill="#35c7b2" />
      <rect x="-9.200" y="-9.200" width="18.500" height="18.500" fill="#0a0a0a" />
      <text x="-8" y="1.500" fontSize="11.500" fontWeight="700" fill="#fff" fontFamily="Liberation Sans" textLength="15.500">
        PC
      </text>
      <rect x="-7.500" y="5" width="7" height="1.500" fill="#fff" />
    </>
  ),
  doc: (
    <>
      <rect x="-10" y="-13.500" width="21" height="28.500" fill="#f0f0f3" />
      <path d="M-10-13V14" stroke="#777" strokeWidth="2" strokeDasharray="1 1" />
      <path d="M9-7H12.500V4H9Z" fill="#7fc2df" />
      <path d="M1-13 8-12 10-6 2-6Z" fill="#c9c9c9" />
      <text x="-5" y="4" fontSize="12" fontWeight="700" fill="#2b4fa8" fontFamily="Liberation Sans">
        C
      </text>
      <path d="M5-3V4" stroke="#d13b40" strokeWidth="2.500" />
      <path d="M-6 6.500H8M-5 9H7M-3 12H5" stroke="#8e92a6" strokeWidth="1" />
    </>
  ),
  thumbA: (
    <>
      <rect x="-15" y="-8.500" width="31" height="18" fill="#f6f6f7" />
      <rect x="-15" y="-8.500" width="31" height="1" fill="#dadada" />
      <path d="M-10-3H-2M-10 0H0M-10 3H-3M3-3H12M3 0H9" stroke="#dcb9bd" strokeWidth=".8" />
      <rect x="5.500" y="5" width="10.500" height="10" fill="#cf1620" />
      <path d="M8 12Q12 9 10.500 7 11 11 14 11" stroke="#fff" fill="none" strokeWidth=".8" />
    </>
  ),
  thumbB: (
    <>
      <rect x="-15" y="-8.500" width="31" height="18" fill="#eeeff0" />
      <rect x="-8" y="-6.500" width="18" height="15" fill="#272a35" />
      <path d="M-6-3H6M-6 0H3M-6 3H7" stroke="#5d6373" strokeWidth=".8" />
      <path d="M5 7 14 6 15 14 6 15Z" fill="#3296e2" />
      <path d="M14 5 11 14" stroke="#dfe3e6" strokeWidth="1.300" />
    </>
  ),
  trash: (
    <>
      <path d="M-11.500-10H11.500L8.500 13Q0 16.500-8.500 13Z" fill="#cdcecf" />
      <path d="M-6-8-5 13M0-8V14M6-8 5 13" stroke="#e4e5e5" strokeWidth="1.600" />
      <ellipse cy="-10.500" rx="11.500" ry="4" fill="#e4e4e4" />
      <path d="M-9-11-4-14 0-12 4-15 9-11 3-8-3-8.500Z" fill="#77797b" />
      <path d="M-4-12 0-10M3-13 6-11" stroke="#d7574b" strokeWidth="1.200" />
      <path d="M-7-10-4-9M1-9 4-10" stroke="#3f9b8b" strokeWidth="1.200" />
    </>
  ),
};

const dock: { k: string; dot?: boolean; badge?: string }[] = [
  { k: "finder", dot: true },
  { k: "siri" },
  { k: "launch" },
  { k: "safari" },
  { k: "mail", dot: true, badge: "18" },
  { k: "contacts" },
  { k: "cal" },
  { k: "notes" },
  { k: "remind" },
  { k: "maps" },
  { k: "photos", badge: "2" },
  { k: "messages", dot: true, badge: "1" },
  { k: "facetime" },
  { k: "itunes", dot: true },
  { k: "books", dot: true },
  { k: "appstore", badge: "1" },
  { k: "prefs" },
  { k: "vscode", dot: true },
  { k: "eclipse", dot: true },
  { k: "vs", dot: true },
  { k: "chrome", dot: true },
  { k: "dict", dot: true },
  { k: "term", dot: true },
  { k: "textedit", dot: true },
  { k: "sourcetree", dot: true },
  { k: "pages", dot: true },
  { k: "acrobat", dot: true },
  { k: "xcode", dot: true },
  { k: "vlc", dot: true },
  { k: "pycharm", dot: true },
];

const DockItem = ({ k, dot, badge, w }: { k: string; dot?: boolean; badge?: string; w?: number }) => (
  <DockSlot $w={w}>
    <svg width="36" height="44" viewBox="-18 -20.500 36 44">
      {dockArt[k]}
      {badge && (
        <>
          <circle cx="10.500" cy="-10.500" r="6" fill="#ec3438" />
          <text x="10.500" y="-7.700" fontSize="8" fill="#fff" textAnchor="middle" fontFamily="Inter">
            {badge}
          </text>
        </>
      )}
      {dot && <circle cy="19.500" r="2" fill="#b3b3b3" />}
    </svg>
  </DockSlot>
);

/* ---------- page parts ---------- */

const RuleCard = ({
  category,
  name,
  gap = 10,
  children,
}: {
  category: string;
  name: string;
  gap?: number;
  children: React.ReactNode;
}) => (
  <Card>
    <Fields>
      <div>
        <Label>Category</Label>
        <Input>{category}</Input>
      </div>
      <div>
        <Label>Name</Label>
        <Input>{name}</Input>
      </div>
    </Fields>
    <Actions $gap={gap}>{children}</Actions>
  </Card>
);

const ViewButton = () => (
  <Button $tone="blue" $w={98}>
    <Glyph name="comments" />
    View
  </Button>
);

const EditButton = () => (
  <Button $tone="green" $w={91}>
    <Glyph name="edit" />
    Edit
  </Button>
);

const menus: [string, number, boolean?][] = [
  ["Chrome", 73, true],
  ["File", 41],
  ["Edit", 44],
  ["View", 49],
  ["History", 65],
  ["Bookmarks", 90],
  ["People", 63],
  ["Window", 70],
  ["Help", 40],
];

export default function App() {
  return (
    <Screen>
      <GlobalStyle />
      <MenuBar>
        <AppleSlot>
          <FaApple size={17} />
        </AppleSlot>
        {menus.map(([t, w, b]) => (
          <MenuItem key={t} $w={w} $bold={b}>
            {t}
          </MenuItem>
        ))}
        <StatusArea>
          <StatusIcon $w={32}>
            <svg width="20" height="16" viewBox="0 0 20 16" fill="none" stroke="#fff" strokeWidth="2">
              <path d="M1 5.800Q10-2.200 19 5.800M4 9Q10 3.500 16 9M7 12Q10 9.500 13 12" />
              <circle cx="10" cy="14" r="1" fill="#fff" stroke="none" />
            </svg>
          </StatusIcon>
          <StatusText $w={30} $size={12.5} $ls={-0.6}>
            80%
          </StatusText>
          <StatusIcon $w={38}>
            <svg width="23" height="12" viewBox="0 0 23 12">
              <rect x=".7" y=".7" width="19" height="10.600" rx="1.500" fill="none" stroke="#fff" strokeWidth="1.200" />
              <rect x="2.300" y="2.300" width="13.500" height="7.400" fill="#fff" />
              <path d="M21 4V8Q23 6 21 4Z" fill="#fff" />
            </svg>
          </StatusIcon>
          <StatusIcon $w={31}>
            <svg width="16" height="10" viewBox="0 0 16 10">
              <rect width="16" height="10" fill="#24407f" />
              <path d="M0 0 8 5M8 0 0 5" stroke="#e9a6ad" strokeWidth="1.300" />
              <path d="M4 0V5M0 2.500H8" stroke="#fff" strokeWidth="2" />
              <path d="M4 0V5M0 2.500H8" stroke="#d2384a" strokeWidth="1" />
              <g fill="#fff">
                <circle cx="4" cy="7.500" r="1" />
                <circle cx="12" cy="1.800" r=".6" />
                <circle cx="12" cy="8.200" r=".7" />
                <circle cx="10" cy="4.600" r=".6" />
                <circle cx="14" cy="4" r=".6" />
              </g>
            </svg>
          </StatusIcon>
          <StatusText $w={108}>Thu 10:44 pm</StatusText>
          <StatusIcon $w={32}>
            <svg width="15" height="15" viewBox="0 0 15 15" fill="none" stroke="#fff" strokeWidth="1.500">
              <circle cx="6" cy="6" r="4.700" />
              <path d="M9.500 9.500 14 14" strokeWidth="1.800" />
            </svg>
          </StatusIcon>
          <StatusIcon $w={28}>
            <svg width="16" height="16" viewBox="-8 -8 16 16">
              <circle r="7.300" fill="#35306b" stroke="#e3e3e8" strokeWidth="1.200" />
              <path d="M-6-2Q0-8 6-3L0 0Z" fill="#ea5c9b" />
              <path d="M-6 2Q-1-1 6 1 4 6-1 6Z" fill="#49c5df" />
              <path d="M0-4 3.500 0 1.200 0 3 5 0 2-3 5-1.200 0-3.500 0Z" fill="#fff" />
            </svg>
          </StatusIcon>
          <StatusIcon $w={41}>
            <svg width="18" height="11" viewBox="0 0 18 11" stroke="#fff" strokeWidth="1.900">
              <path d="M0 1H2M5 1H16M0 5.500H2M5 5.500H18M0 10H2M5 10H18" />
            </svg>
          </StatusIcon>
        </StatusArea>
      </MenuBar>

      <BackWindow>
        <BackTitle>
          <BackDot />
          <BackDot />
          <BackDot />
          <BackCaption>
            <svg width="12" height="15" viewBox="0 0 12 15" fill="#f6f6f6" stroke="#b8b8b8">
              <path d="M.5.5H7.500L11.500 4.500V14.500H.5ZM7.500.5V4.500H11.500M3 6.500H9" />
            </svg>
            the error to start.com.Nadia_R S.txt
            <svg width="7" height="14" viewBox="0 0 7 14" fill="none" stroke="#a6a6a6" strokeWidth="1.300">
              <path d="M0 6 3.500 9 7 6" />
            </svg>
          </BackCaption>
        </BackTitle>

        <Browser>
          <TabStrip>
            <Lights>
              <Light $c="#fd5a55" $b="#e2514d" />
              <Light $c="#fdb845" $b="#e3a33c" />
              <Light $c="#0bc750" $b="#0fae45" />
            </Lights>
            {tabs.map((t, i) => (
              <Tab key={i} $w={tabWidth(i)} $edge={i === tabs.length - 1}>
                <Favicon kind={t} />
              </Tab>
            ))}
            <ActiveTab>
              <svg width="9" height="9" viewBox="0 0 9 9" stroke="#5a5d61" strokeWidth="1.500">
                <path d="M.8.8 8.200 8.200M8.200.8.8 8.200" />
              </svg>
            </ActiveTab>
            <NewTab>
              <svg width="12" height="12" viewBox="0 0 12 12" stroke="#55585c" strokeWidth="1.900">
                <path d="M6 0V12M0 6H12" />
              </svg>
            </NewTab>
          </TabStrip>

          <Toolbar>
            <NavButton $w={32}>
              <svg width="16" height="14" viewBox="0 0 16 14" fill="none" stroke="#575b60" strokeWidth="2">
                <path d="M15 7H2M7.500 1 1.500 7 7.500 13" />
              </svg>
            </NavButton>
            <NavButton $w={33}>
              <svg width="16" height="14" viewBox="0 0 16 14" fill="none" stroke="#b9bbbe" strokeWidth="1.900">
                <path d="M1 7H14M8.500 1 14.500 7 8.500 13" />
              </svg>
            </NavButton>
            <NavButton $w={29}>
              <svg width="14" height="14" viewBox="0 0 14 14" fill="none" stroke="#575b60" strokeWidth="2">
                <path d="M12 9A5.800 5.800 0 1 1 11 3L12 4.500" />
                <path d="M14 0V6.200H7.800Z" fill="#575b60" stroke="none" />
              </svg>
            </NavButton>
            <Omnibox>
              <svg width="14" height="14" viewBox="0 0 14 14">
                <circle cx="7" cy="7" r="6.200" fill="none" stroke="#5c6064" strokeWidth="1.400" />
                <path d="M7 6V10.500M7 3.300V4.900" stroke="#5c6064" strokeWidth="1.500" />
              </svg>
              <Url>
                <b>localhost</b>:3000/ViewRulesPage
              </Url>
              <svg width="15" height="15" viewBox="0 0 16 16" fill="none" stroke="#5a5e62" strokeWidth="1.400">
                <path d="M8 1.500 9.900 5.900 14.700 6.300 11 9.500 12.200 14.200 8 11.700 3.800 14.200 5 9.500 1.300 6.300 6.100 5.900Z" />
              </svg>
            </Omnibox>
            <Extensions>
              <Slot $ml={16}>
                <Box16>
                  <path d="M4.700 0H11.300L16 4.700V11.300L11.300 16H4.700L0 11.300V4.700Z" fill="#d3000f" />
                  <text x="1.200" y="10.900" fontSize="8" fontWeight="700" fill="#fff" fontFamily="Liberation Sans" textLength="13.600" lengthAdjust="spacingAndGlyphs">
                    ABP
                  </text>
                </Box16>
              </Slot>
              <Slot $ml={16}>
                <Box16>
                  <path d="M8.500 0C9 2 11 3 11 5L13 3.500C13 5 14.500 7 14 10.500 13.500 14 11 16 8 16S2.300 14 1.800 10.500C1.500 7 3.500 6.500 3.500 4.500L5.500 6C5.500 3.500 8.500 2.500 8.500 0Z" fill="#e8472b" />
                  <circle cx="8" cy="10.300" r="5" fill="#f3a43a" />
                  <circle cx="6" cy="9" r=".9" fill="#5a2b13" />
                  <circle cx="10" cy="9" r=".9" fill="#5a2b13" />
                  <path d="M5 11.500Q8 14.500 11 11.500" stroke="#5a2b13" fill="none" />
                </Box16>
              </Slot>
              <Rule />
              <Avatar>광제</Avatar>
              <Slot $ml={14}>
                <Box16>
                  <circle cx="8" cy="8" r="8" fill="#0d8f43" />
                  <path d="M8 3.500 12 8H9.800V12H6.200V8H4Z" fill="#fff" />
                </Box16>
              </Slot>
            </Extensions>
          </Toolbar>

          <Page>
            <Content>
              <Card $tail />
              <RuleCard category="this is test category" name="demo rules">
                <ViewButton />
                <EditButton />
              </RuleCard>
              <RuleCard category="government" name="dva act triage">
                <ViewButton />
                <EditButton />
              </RuleCard>
              <RuleCard category="government" name="dva act triage second" gap={11}>
                <ViewButton />
                <Button $tone="teal" $w={94}>
                  <Glyph name="save" size={16} />
                  Save
                </Button>
                <Button $tone="grey" $w={108}>
                  <Glyph name="times" size={16} />
                  Cancel
                </Button>
              </RuleCard>
              <FooterActions>
                <Button $tone="red" $w={88} $short>
                  <Glyph name="plus" size={13} />
                  Add
                </Button>
                <Button $tone="grey" $w={104} $short>
                  <Glyph name="times" size={13} />
                  Cancel
                </Button>
              </FooterActions>
            </Content>
            <ScrollTrack>
              <Thumb />
            </ScrollTrack>
          </Page>
        </Browser>

        <BackFoot>
          <ConsoleLine>beans-4.3.13.RELEASE.jar:4.3.13.RELEASE]</ConsoleLine>
        </BackFoot>
      </BackWindow>

      <Dock>
        {dock.map((d) => (
          <DockItem key={d.k} {...d} />
        ))}
        <DockSlot $w={17}>
          <svg width="1" height="44">
            <rect y="6" width="1" height="32" fill="#6b6b6b" />
          </svg>
        </DockSlot>
        <DockItem k="doc" w={34} />
        <DockItem k="thumbA" />
        <DockItem k="thumbB" />
        <DockItem k="trash" />
      </Dock>

      <Overlay width="1280" height="800" viewBox="0 0 1280 800" fill="none">
        <rect x="42.500" y="494.600" width="1218" height="83" rx="25" stroke="#1f45f5" strokeWidth="2.500" />
        <path d="M540 423.500 653 486" stroke="#1f45f5" strokeWidth="2.500" />
        <path d="M662 491.300 648 490.500 654.500 480Z" fill="#1f45f5" />
        <rect x="1015.500" y="567.700" width="113.700" height="50" rx="25" stroke="#f8271b" strokeWidth="2.500" />
        <path d="M724 664 1003 612" stroke="#f8271b" strokeWidth="2.500" />
        <path d="M1014 610 1001 606.200 1003 618Z" fill="#f8271b" />
        <g fill="#fb3323" stroke="#fb3323" strokeWidth=".25" fontFamily="Liberation Sans, sans-serif" fontSize="19.500">
          <text x="283.500" y="430.500" textLength="255">
            1.Type ‘Category’ and ‘Name’
          </text>
          <text x="596.500" y="673.500" textLength="113.500">
            2. Then Click
          </text>
        </g>
      </Overlay>
    </Screen>
  );
}
